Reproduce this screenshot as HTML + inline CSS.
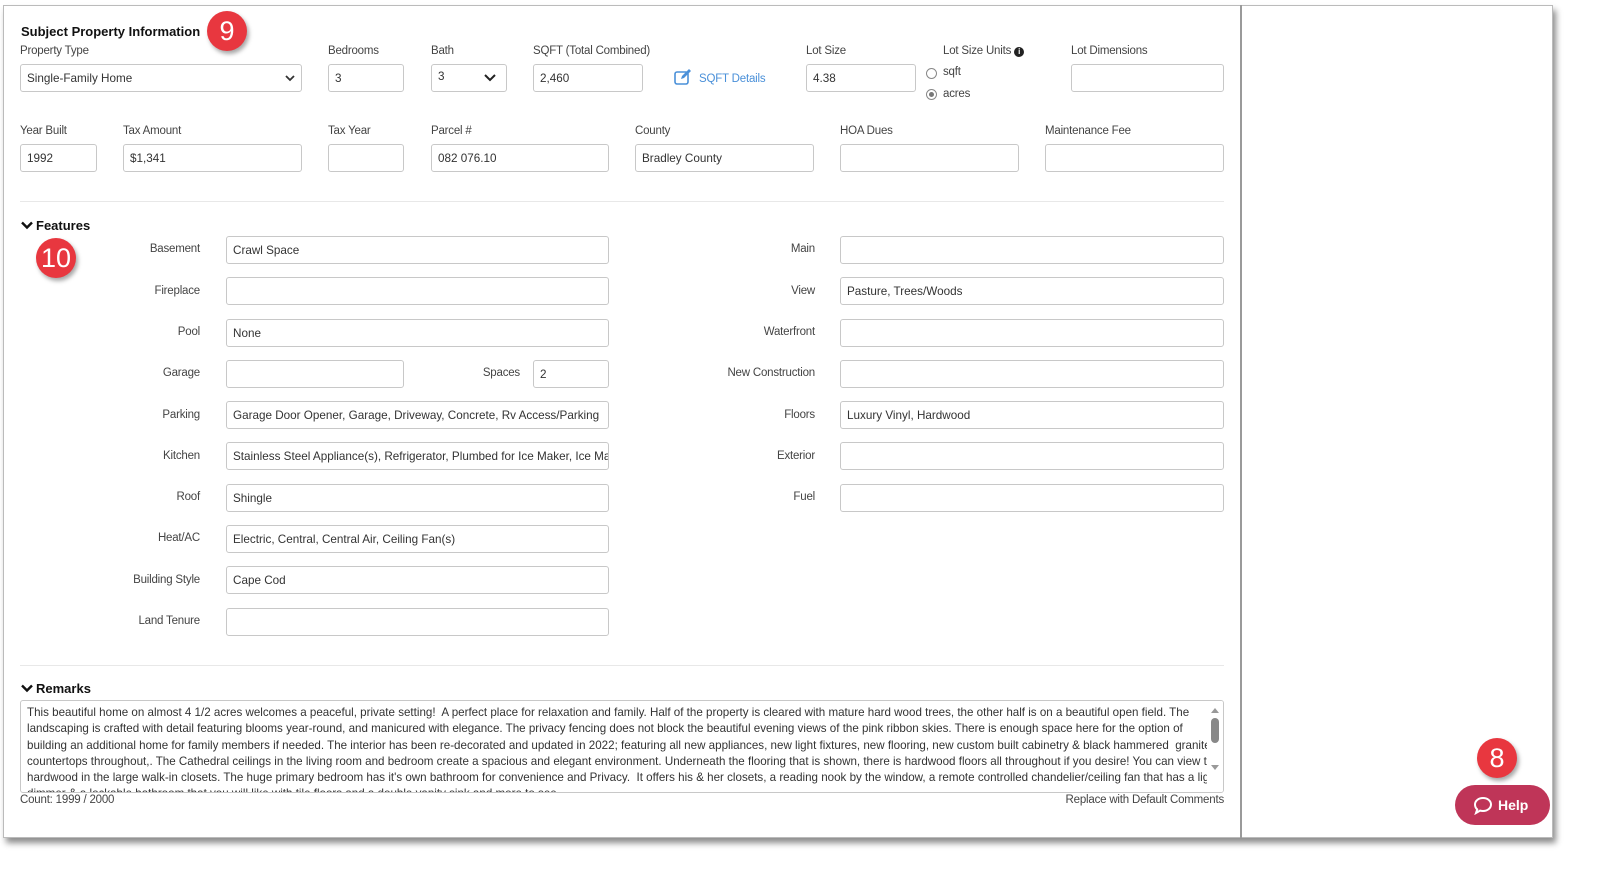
<!DOCTYPE html>
<html><head><meta charset="utf-8"><style>
*{box-sizing:border-box;margin:0;padding:0}
body{width:1606px;height:872px;background:#fff;position:relative;overflow:hidden;font-family:"Liberation Sans",Arial,sans-serif;}
.frame{position:absolute;left:3px;top:5px;width:1550px;height:833px;background:#fff;border:1px solid #bbb;box-shadow:3px 5px 6px rgba(0,0,0,.45);}
.vline{position:absolute;left:1240px;top:5px;width:2px;height:833px;background:#9a9a9a}
.l{position:absolute;font-size:11.5px;color:#444;letter-spacing:-.2px;white-space:nowrap}
.r{text-align:right}
.i{position:absolute;height:28px;border:1px solid #c8c8c8;border-radius:3px;background:#fff;font-size:11.7px;color:#333;padding:7px 6px;white-space:nowrap;overflow:hidden}
.h{position:absolute;font-size:13px;font-weight:bold;color:#111}
.sep{position:absolute;left:20px;width:1204px;height:1px;background:#e8e8e8}
.badge{position:absolute;width:40px;height:40px;border-radius:50%;background:#e8373f;color:#fff;font-size:27px;text-align:center;line-height:40px;box-shadow:2px 3px 4px rgba(0,0,0,.35)}
.chev{position:absolute;right:6px;top:6px}
.rad{position:absolute;width:11px;height:11px;border:1px solid #888;border-radius:50%;background:#fff}
</style></head><body>
<div class="frame"></div>
<div class="vline"></div>

<div class="h" style="left:21px;top:24px">Subject Property Information</div>
<div class="badge" style="left:207px;top:11px">9</div>

<div class="l" style="left:20px;top:45px">Property Type</div>
<div class="i" style="left:20px;top:64px;width:282px">Single-Family Home<svg class="chev" style="top:9px" width="10" height="8" viewBox="0 0 10 8"><path d="M1 2l4 4 4-4" stroke="#333" stroke-width="1.8" fill="none"/></svg></div>
<div class="l" style="left:328px;top:45px">Bedrooms</div>
<div class="i" style="left:328px;top:64px;width:76px">3</div>
<div class="l" style="left:431px;top:45px">Bath</div>
<div class="i" style="left:431px;top:64px;width:76px;padding-top:5px">3<svg class="chev" style="right:10px;top:9px" width="12" height="8" viewBox="0 0 12 8"><path d="M1 1l5 5 5-5" stroke="#222" stroke-width="2" fill="none"/></svg></div>
<div class="l" style="left:533px;top:45px">SQFT (Total Combined)</div>
<div class="i" style="left:533px;top:64px;width:110px">2,460</div>
<svg style="position:absolute;left:674px;top:68px" width="20" height="18" viewBox="0 0 20 18"><rect x="1" y="4" width="13" height="12" rx="2" fill="none" stroke="#4a90d9" stroke-width="1.6"/><path d="M7 11l1-3 7-7 2 2-7 7z" fill="#4a90d9"/></svg>
<div class="l" style="left:699px;top:73px;color:#4a90d9">SQFT Details</div>
<div class="l" style="left:806px;top:45px">Lot Size</div>
<div class="i" style="left:806px;top:64px;width:110px">4.38</div>
<div class="l" style="left:943px;top:45px">Lot Size Units <span style="display:inline-block;width:10px;height:10px;border-radius:50%;background:#222;color:#fff;font-size:8px;text-align:center;line-height:10px;font-weight:bold">i</span></div>
<div class="rad" style="left:926px;top:68px"></div><div class="l" style="left:943px;top:66px">sqft</div>
<div class="rad" style="left:926px;top:89px"><div style="width:5px;height:5px;border-radius:50%;background:#777;margin:2px"></div></div><div class="l" style="left:943px;top:88px">acres</div>
<div class="l" style="left:1071px;top:45px">Lot Dimensions</div>
<div class="i" style="left:1071px;top:64px;width:153px"></div>

<div class="l" style="left:20px;top:125px">Year Built</div>
<div class="i" style="left:20px;top:144px;width:77px">1992</div>
<div class="l" style="left:123px;top:125px">Tax Amount</div>
<div class="i" style="left:123px;top:144px;width:179px">$1,341</div>
<div class="l" style="left:328px;top:125px">Tax Year</div>
<div class="i" style="left:328px;top:144px;width:76px"></div>
<div class="l" style="left:431px;top:125px">Parcel #</div>
<div class="i" style="left:431px;top:144px;width:178px">082 076.10</div>
<div class="l" style="left:635px;top:125px">County</div>
<div class="i" style="left:635px;top:144px;width:179px">Bradley County</div>
<div class="l" style="left:840px;top:125px">HOA Dues</div>
<div class="i" style="left:840px;top:144px;width:179px"></div>
<div class="l" style="left:1045px;top:125px">Maintenance Fee</div>
<div class="i" style="left:1045px;top:144px;width:179px"></div>

<div class="sep" style="top:201px"></div>
<div class="h" style="left:21px;top:218px"><svg width="12" height="9" viewBox="0 0 12 9" style="margin-right:3px"><path d="M1 1.5l5 5 5-5" stroke="#111" stroke-width="2.4" fill="none"/></svg>Features</div>
<div class="badge" style="left:36px;top:238px">10</div>

<div class="l r" style="left:100px;width:100px;top:243px">Basement</div><div class="i" style="left:226px;top:236px;width:383px">Crawl Space</div>
<div class="l r" style="left:100px;width:100px;top:285px">Fireplace</div><div class="i" style="left:226px;top:277px;width:383px"></div>
<div class="l r" style="left:100px;width:100px;top:326px">Pool</div><div class="i" style="left:226px;top:319px;width:383px">None</div>
<div class="l r" style="left:100px;width:100px;top:367px">Garage</div><div class="i" style="left:226px;top:360px;width:178px"></div>
<div class="l r" style="left:420px;width:100px;top:367px">Spaces</div><div class="i" style="left:533px;top:360px;width:76px">2</div>
<div class="l r" style="left:100px;width:100px;top:409px">Parking</div><div class="i" style="left:226px;top:401px;width:383px">Garage Door Opener, Garage, Driveway, Concrete, Rv Access/Parking</div>
<div class="l r" style="left:100px;width:100px;top:450px">Kitchen</div><div class="i" style="left:226px;top:442px;width:383px">Stainless Steel Appliance(s), Refrigerator, Plumbed for Ice Maker, Ice Maker</div>
<div class="l r" style="left:100px;width:100px;top:491px">Roof</div><div class="i" style="left:226px;top:484px;width:383px">Shingle</div>
<div class="l r" style="left:100px;width:100px;top:532px">Heat/AC</div><div class="i" style="left:226px;top:525px;width:383px">Electric, Central, Central Air, Ceiling Fan(s)</div>
<div class="l r" style="left:100px;width:100px;top:574px">Building Style</div><div class="i" style="left:226px;top:566px;width:383px">Cape Cod</div>
<div class="l r" style="left:100px;width:100px;top:615px">Land Tenure</div><div class="i" style="left:226px;top:608px;width:383px"></div>

<div class="l r" style="left:640px;width:175px;top:243px">Main</div><div class="i" style="left:840px;top:236px;width:384px"></div>
<div class="l r" style="left:640px;width:175px;top:285px">View</div><div class="i" style="left:840px;top:277px;width:384px">Pasture, Trees/Woods</div>
<div class="l r" style="left:640px;width:175px;top:326px">Waterfront</div><div class="i" style="left:840px;top:319px;width:384px"></div>
<div class="l r" style="left:640px;width:175px;top:367px">New Construction</div><div class="i" style="left:840px;top:360px;width:384px"></div>
<div class="l r" style="left:640px;width:175px;top:409px">Floors</div><div class="i" style="left:840px;top:401px;width:384px">Luxury Vinyl, Hardwood</div>
<div class="l r" style="left:640px;width:175px;top:450px">Exterior</div><div class="i" style="left:840px;top:442px;width:384px"></div>
<div class="l r" style="left:640px;width:175px;top:491px">Fuel</div><div class="i" style="left:840px;top:484px;width:384px"></div>

<div class="sep" style="top:665px"></div>
<div class="h" style="left:21px;top:681px"><svg width="12" height="9" viewBox="0 0 12 9" style="margin-right:3px"><path d="M1 1.5l5 5 5-5" stroke="#111" stroke-width="2.4" fill="none"/></svg>Remarks</div>
<div style="position:absolute;left:20px;top:700px;width:1204px;height:93px;border:1px solid #c8c8c8;border-radius:3px;overflow:hidden;font-size:11.6px;line-height:16.3px;color:#333;padding:4px 22px 0 6px;white-space:nowrap">
This beautiful home on almost 4 1/2 acres welcomes a peaceful, private setting!&nbsp; A perfect place for relaxation and family. Half of the property is cleared with mature hard wood trees, the other half is on a beautiful open field. The<br>
landscaping is crafted with detail featuring blooms year-round, and manicured with elegance. The privacy fencing does not block the beautiful evening views of the pink ribbon skies. There is enough space here for the option of<br>
building an additional home for family members if needed. The interior has been re-decorated and updated in 2022; featuring all new appliances, new light fixtures, new flooring, new custom built cabinetry &amp; black hammered&nbsp; granite<br>
countertops throughout,. The Cathedral ceilings in the living room and bedroom create a spacious and elegant environment. Underneath the flooring that is shown, there is hardwood floors all throughout if you desire! You can view the<br>
hardwood in the large walk-in closets. The huge primary bedroom has it's own bathroom for convenience and Privacy.&nbsp; It offers his &amp; her closets, a reading nook by the window, a remote controlled chandelier/ceiling fan that has a light<br>
dimmer &amp; a lockable bathroom that you will like with tile floors and a double vanity sink and more to see
<div style="position:absolute;right:0;top:0;width:16px;height:100%;background:#fff"><div style="position:absolute;left:4px;top:7px;border:4px solid transparent;border-bottom:5px solid #999;border-top:none"></div><div style="position:absolute;left:4px;top:17px;width:8px;height:25px;border-radius:4px;background:#888"></div><div style="position:absolute;left:4px;top:64px;border:4px solid transparent;border-top:5px solid #999;border-bottom:none"></div></div>
</div>
<div class="l" style="left:20px;top:794px">Count: 1999 / 2000</div>
<div class="l r" style="left:1000px;width:224px;top:794px">Replace with Default Comments</div>

<div class="badge" style="left:1477px;top:738px">8</div>
<div style="position:absolute;left:1455px;top:785px;width:95px;height:40px;border-radius:20px;background:#bf3558;color:#fff;font-weight:bold;font-size:14px;line-height:40px;padding-left:43px">Help</div>
<svg style="position:absolute;left:1473px;top:796px" width="20" height="19" viewBox="0 0 20 19"><path d="M10 2c4.4 0 8 2.8 8 6.5S14.4 15 10 15c-1 0-2-.1-2.9-.4L3 17l1.2-3.6C2.8 12.2 2 10.4 2 8.5 2 4.8 5.6 2 10 2z" fill="none" stroke="#fff" stroke-width="2"/></svg>
</body></html>
